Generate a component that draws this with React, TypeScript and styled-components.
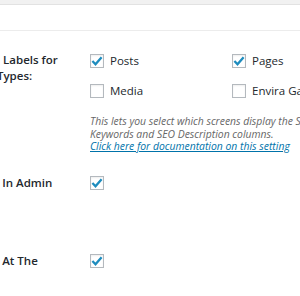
import styled, { createGlobalStyle } from "styled-components";

const GlobalStyle = createGlobalStyle`
  html, body {
    margin: 0;
    padding: 0;
    background: #fff;
    overflow: hidden;
  }
  body {
    font-family: "Open Sans", "Noto Sans", sans-serif;
    color: #23282d;
  }
`;

const Page = styled.div`
  width: 300px;
  height: 296px;
  overflow: hidden;
  background: #fff;
`;

const TopStrip = styled.div`
  height: 4px;
  background: #f1f1f1;
  border-bottom: 1px solid #e2e2e2;
`;

const HeaderSpace = styled.div`
  height: 25px;
  border-bottom: 1px solid #ececec;
`;

const Row = styled.div`
  display: flex;
  align-items: flex-start;
`;

const Label = styled.div`
  flex: none;
  margin-left: -76px;
  width: 166px;
  padding: 21px 0 25px;
  font-size: 11.5px;
  line-height: 16px;
  font-weight: 600;
  white-space: nowrap;
`;

const Field = styled.div`
  flex: none;
  padding: 22.5px 0 1px;
`;

const Options = styled.div`
  display: grid;
  grid-template-columns: 142px 142px;
  row-gap: 16px;
`;

const Option = styled.label`
  display: flex;
  align-items: center;
  height: 14px;
  font-size: 11.5px;
  white-space: nowrap;
`;

const Box = styled.span`
  flex: none;
  width: 12px;
  height: 12px;
  margin-right: 6px;
  border: 1px solid #b4b9be;
  background: #fff;
  box-shadow: inset 0 1px 2px rgba(0, 0, 0, 0.07);
  display: flex;
  align-items: center;
  justify-content: center;
`;

const Description = styled.p`
  margin: 17.5px 0 0;
  font-size: 10.4px;
  line-height: 12.5px;
  font-style: italic;
  color: #666;
  white-space: nowrap;
`;

const DocLink = styled.a`
  color: #0073aa;
  text-decoration: underline;
`;

function Check({ checked }: { checked?: boolean }) {
  return (
    <Box>
      {checked && (
        <svg width="12" height="10" viewBox="0 0 12 10">
          <path d="M1.4 5 L4.5 8.2 L10.6 1.2" fill="none" stroke="#1e8cbe" strokeWidth="2.3" />
        </svg>
      )}
    </Box>
  );
}

export default function App() {
  return (
    <Page>
      <GlobalStyle />
      <TopStrip />
      <HeaderSpace />
      <Row>
        <Label>
          Show Column Labels for
          <br />
          Custom Post Types:
        </Label>
        <Field>
          <Options>
            <Option>
              <Check checked />
              Posts
            </Option>
            <Option>
              <Check checked />
              Pages
            </Option>
            <Option>
              <Check />
              Media
            </Option>
            <Option>
              <Check />
              Envira Gallery
            </Option>
          </Options>
          <Description>
            This lets you select which screens display the SEO Title, SEO
            <br />
            Keywords and SEO Description columns.
            <br />
            <DocLink href="#">Click here for documentation on this setting</DocLink>
          </Description>
        </Field>
      </Row>
      <Row>
        <Label>
          Display Menu In Admin
          <br />
          Bar:
        </Label>
        <Field>
          <Check checked />
        </Field>
      </Row>
      <Row>
        <Label>
          Display Menu At The
          <br />
          Top:
        </Label>
        <Field>
          <Check checked />
        </Field>
      </Row>
    </Page>
  );
}
